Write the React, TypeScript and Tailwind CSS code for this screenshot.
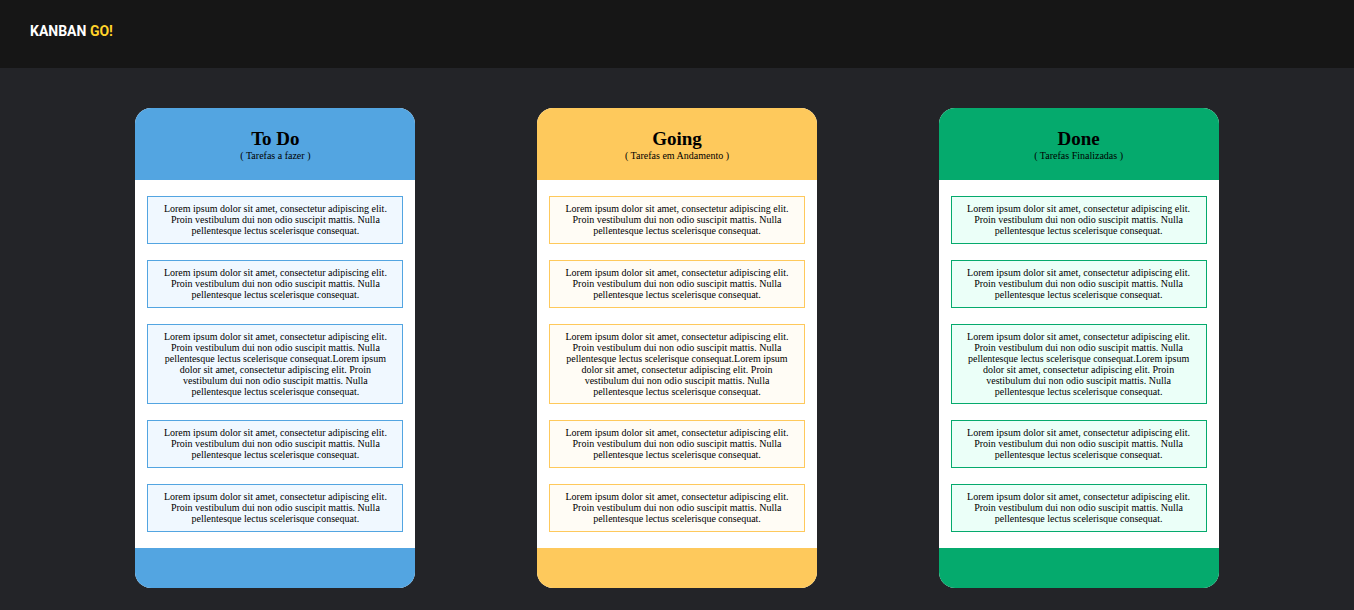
const SHORT_TASK =
  "Lorem ipsum dolor sit amet, consectetur adipiscing elit. Proin vestibulum dui non odio suscipit mattis. Nulla pellentesque lectus scelerisque consequat.";
const LONG_TASK = SHORT_TASK + SHORT_TASK;

const TASKS = [SHORT_TASK, SHORT_TASK, LONG_TASK, SHORT_TASK, SHORT_TASK];

type ColumnProps = {
  title: string;
  subtitle: string;
  barClass: string;
  cardClass: string;
};

const COLUMNS: ColumnProps[] = [
  {
    title: "To Do",
    subtitle: "( Tarefas a fazer )",
    barClass: "bg-[#53a5e1]",
    cardClass: "border-[#53a5e1] bg-[#f0f8ff]",
  },
  {
    title: "Going",
    subtitle: "( Tarefas em Andamento )",
    barClass: "bg-[#fec95c]",
    cardClass: "border-[#fec95c] bg-[#fffcf5]",
  },
  {
    title: "Done",
    subtitle: "( Tarefas Finalizadas )",
    barClass: "bg-[#05aa6d]",
    cardClass: "border-[#05aa6d] bg-[#ebfff8]",
  },
];

function Column({ title, subtitle, barClass, cardClass }: ColumnProps) {
  return (
    <section className="w-[280px] shrink-0 overflow-hidden rounded-2xl bg-white">
      <header className={`flex h-[72px] flex-col items-center justify-center ${barClass}`}>
        <h2 className="text-[19px] leading-[22px] font-bold">{title}</h2>
        <p className="text-[10px] leading-[11px]">{subtitle}</p>
      </header>
      <ul className="flex flex-col gap-4 px-3 py-4">
        {TASKS.map((task, index) => (
          <li
            key={index}
            className={`min-h-12 border px-3 py-1.5 text-center text-[10px] leading-[11px] ${cardClass}`}
          >
            {task}
          </li>
        ))}
      </ul>
      <div className={`h-10 ${barClass}`} />
    </section>
  );
}

export default function App() {
  return (
    <div className="min-h-screen bg-[#232428] font-['Liberation_Serif',serif] text-black">
      <header className="flex h-[68px] items-start bg-[#161616] px-[30px] pt-5">
        <h1 className="font-[Roboto,sans-serif] text-sm leading-[22px] font-bold text-white">
          KANBAN <span className="text-[#ffd32a]">GO!</span>
        </h1>
      </header>
      <main className="flex items-start justify-between px-[10%] pt-10 pb-5">
        {COLUMNS.map((column) => (
          <Column key={column.title} {...column} />
        ))}
      </main>
    </div>
  );
}
